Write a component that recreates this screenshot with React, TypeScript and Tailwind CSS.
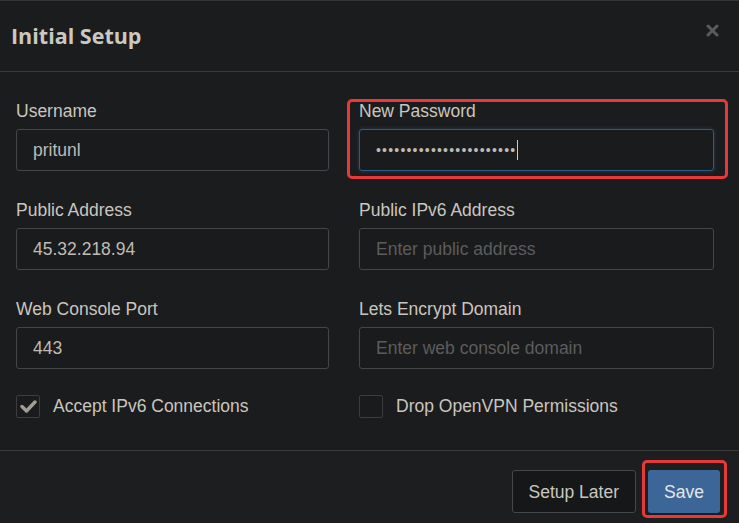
import React from "react";

const labelCls = "block text-[17.5px] leading-5 text-[#cac6bf] mb-[8px]";
const inputCls =
  "block w-full h-[42px] rounded-[3px] border border-[#464646] bg-[#1a1b1d] px-4 text-[17.5px] text-[#bfbcb5] placeholder:text-[#5c5c5c] outline-none";

function Field({
  label,
  value,
  placeholder,
}: {
  label: string;
  value?: string;
  placeholder?: string;
}) {
  return (
    <div>
      <label className={labelCls}>{label}</label>
      <input className={inputCls} defaultValue={value} placeholder={placeholder} readOnly />
    </div>
  );
}

function Checkbox({ checked, label }: { checked?: boolean; label: string }) {
  return (
    <div className="flex items-center gap-[13px]">
      <span className="flex h-[23px] w-6 items-center justify-center rounded-[2px] border border-[#3d3d3d] bg-[#1a1b1d]">
        {checked && (
          <svg width="17" height="13" viewBox="0 0 17 13" fill="none">
            <path
              d="M2 6.5 L6.5 11 L15 2"
              stroke="#a29e97"
              strokeWidth="3.4"
              strokeLinecap="round"
              strokeLinejoin="round"
            />
          </svg>
        )}
      </span>
      <span className="text-[17.5px] text-[#cac6bf]">{label}</span>
    </div>
  );
}

export default function App() {
  return (
    <div
      className="h-[523px] w-[739px] overflow-hidden border-t border-[#353535] bg-[#1b1c1e]"
      style={{ fontFamily: '"Liberation Sans", Arial, sans-serif' }}
    >
      {/* header */}
      <div className="flex h-[71px] items-center justify-between border-b border-[#3a3a3a] pl-[11px] pr-5">
        <h1
          className="text-[21.5px] font-bold text-[#ccc8c1]"
          style={{ fontFamily: '"Open Sans", sans-serif' }}
        >
          Initial Setup
        </h1>
        <svg width="13" height="13" viewBox="0 0 13 13" className="-mt-3">
          <path d="M2 2 L11 11 M11 2 L2 11" stroke="#5b5b5b" strokeWidth="3" strokeLinecap="round" />
        </svg>
      </div>

      {/* body */}
      <div className="pl-4 pt-[29px]">
        <div className="grid grid-cols-[313px_355px] gap-x-[30px] gap-y-[29px]">
          <Field label="Username" value="pritunl" />

          <div className="relative">
            <label className={labelCls}>New Password</label>
            <div className="flex h-[42px] items-center rounded-[3px] border border-[#2f5a86] bg-[#1a1b1d] px-4 shadow-[0_0_4px_rgba(60,120,190,0.35)]">
              <span className="text-[14px] tracking-[1.2px] text-[#bdbab3]">
                {"•".repeat(23)}
              </span>
              <span className="ml-[1px] h-5 w-px bg-[#cfcbc4]" />
            </div>
            <div className="pointer-events-none absolute -bottom-[8px] -left-[12px] -right-[14px] -top-[2px] rounded-[5px] border-[3px] border-[#e8393a]" />
          </div>

          <Field label="Public Address" value="45.32.218.94" />
          <Field label="Public IPv6 Address" placeholder="Enter public address" />
          <Field label="Web Console Port" value="443" />
          <Field label="Lets Encrypt Domain" placeholder="Enter web console domain" />
        </div>

        <div className="mt-[24px] grid grid-cols-[313px_355px] gap-x-[30px]">
          <Checkbox checked label="Accept IPv6 Connections" />
          <Checkbox label="Drop OpenVPN Permissions" />
        </div>
      </div>

      {/* footer */}
      <div className="mt-[31px] flex justify-end gap-3 border-t border-[#393939] bg-[#1d1e20] pr-[19px] pt-[19px] pb-5">
        <button className="h-[43px] rounded-[3px] border border-[#474747] bg-[#161719] px-4 text-[17.5px] text-[#cac6bf]">
          Setup Later
        </button>
        <div className="relative">
          <button className="h-[43px] w-[72px] rounded-[3px] bg-[#3b6697] text-[17.5px] text-[#e4e6ea]">
            Save
          </button>
          <div className="pointer-events-none absolute -bottom-[5px] -left-[6px] -right-[7px] -top-[10px] rounded-[5px] border-[3px] border-[#e8393a]" />
        </div>
      </div>
    </div>
  );
}
